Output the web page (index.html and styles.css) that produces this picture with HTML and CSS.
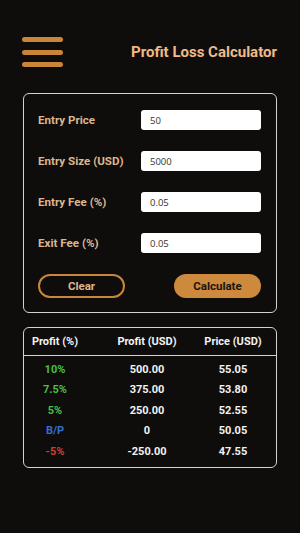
FILE: index.html
```html
<!DOCTYPE html>
<html lang="en">

<head>
    <meta charset="UTF-8">
    <meta name="viewport" content="width=device-width, initial-scale=1.0">
    <title>Profit Loss Calculator</title>
    <link rel="stylesheet" href="styles.css">
</head>

<body>
    <div id="nav">
        <div class="menu">
            <span></span>
            <span></span>
            <span></span>
        </div>
        <h1 class="heading">Profit Loss Calculator</h1>
    </div>

    <!-- Input Form -->
    <div class="card form">
        <div class="row">
            <label>Entry Price</label>
            <input type="text" value="50">
        </div>
        <div class="row">
            <label>Entry Size (USD)</label>
            <input type="text" value="5000">
        </div>
        <div class="row">
            <label>Entry Fee (%)</label>
            <input type="text" value="0.05">
        </div>
        <div class="row">
            <label>Exit Fee (%)</label>
            <input type="text" value="0.05">
        </div>
        <div class="buttons">
            <button class="btn btn-outline">Clear</button>
            <button class="btn btn-fill">Calculate</button>
        </div>
    </div>

    <!-- Result Table -->
    <div class="card results">
        <div class="thead">
            <span>Profit (%)</span>
            <span>Profit (USD)</span>
            <span>Price (USD)</span>
        </div>
        <div class="tbody">
            <span class="green">10%</span><span>500.00</span><span>55.05</span>
            <span class="green">7.5%</span><span>375.00</span><span>53.80</span>
            <span class="green">5%</span><span>250.00</span><span>52.55</span>
            <span class="blue">B/P</span><span>0</span><span>50.05</span>
            <span class="red">-5%</span><span>-250.00</span><span>47.55</span>
        </div>
    </div>
</body>

</html>
```

FILE: styles.css
```css
* {
    margin: 0;
    padding: 0;
    box-sizing: border-box;
}

body {
    background-color: #0f0d0c;
    font-family: Roboto, "Liberation Sans", sans-serif;
}

/* Header */
#nav {
    display: flex;
    justify-content: space-between;
    align-items: center;
    padding: 37px 23px 0 22px;
}

.menu {
    display: flex;
    flex-direction: column;
    gap: 7.5px;
    width: 41px;
}

.menu span {
    display: block;
    height: 5px;
    border-radius: 3px;
    background-color: #c98538;
}

.heading {
    font-size: 15px;
    font-weight: bold;
    color: #efba86;
}

/* Cards */
.card {
    margin: 0 23px;
    border: 1.5px solid #d2d2d2;
    border-radius: 6px;
}

.form {
    margin-top: 26px;
    padding: 16px 15px 14px 14px;
    display: flex;
    flex-direction: column;
    gap: 21px;
}

.row {
    display: flex;
    justify-content: space-between;
    align-items: center;
    height: 20px;
}

.row label {
    font-size: 11.6px;
    font-weight: bold;
    color: #dcb68c;
}

.row input {
    width: 120px;
    height: 20px;
    border: none;
    border-radius: 3px;
    background: #fff;
    padding-left: 9px;
    font-family: "Open Sans", Roboto, sans-serif;
    font-size: 9.5px;
    color: #333;
    outline: none;
}

.buttons {
    display: flex;
    justify-content: space-between;
}

.btn {
    width: 87px;
    height: 24px;
    border-radius: 12px;
    font-family: Roboto, "Liberation Sans", sans-serif;
    font-size: 11.5px;
    font-weight: bold;
    cursor: pointer;
}

.btn-outline {
    background: transparent;
    border: 2px solid #c98538;
    color: #dcb68c;
}

.btn-fill {
    background-color: #cd893c;
    border: none;
    color: #1a1410;
}

/* Results */
.results {
    margin-top: 14px;
    height: 141px;
}

.thead,
.tbody {
    display: grid;
    grid-template-columns: 62px 122px 50px;
    justify-items: center;
    font-size: 11px;
    font-weight: bold;
    color: #f2f2f2;
}

.thead {
    height: 28px;
    align-items: center;
    border-bottom: 1.5px solid #d2d2d2;
}

.tbody {
    padding-top: 3px;
    grid-auto-rows: 20.5px;
    align-items: center;
}

.thead span,
.tbody span {
    white-space: nowrap;
}

.green {
    color: #47bf45;
}

.blue {
    color: #356dd6;
}

.red {
    color: #cf3e2c;
}
```
